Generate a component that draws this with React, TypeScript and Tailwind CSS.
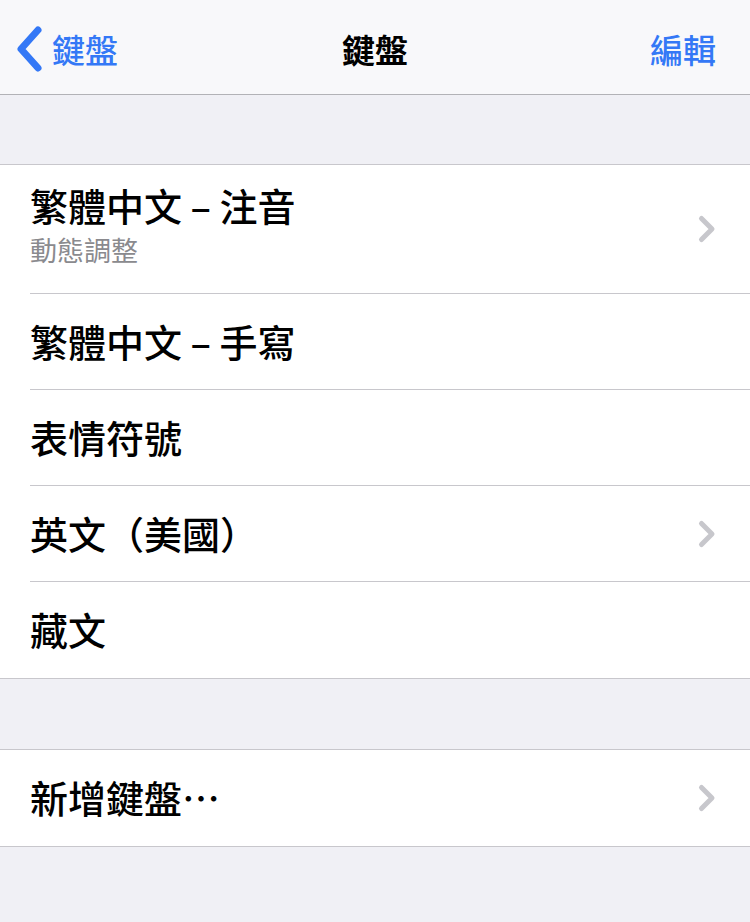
import React from "react";

const font = { fontFamily: '"Noto Sans CJK TC", "Noto Sans", sans-serif' };

interface Row {
  title: string;
  subtitle?: string;
  chevron?: boolean;
}

const keyboards: Row[] = [
  { title: "繁體中文 – 注音", subtitle: "動態調整", chevron: true },
  { title: "繁體中文 – 手寫" },
  { title: "表情符號" },
  { title: "英文（美國）", chevron: true },
  { title: "藏文" },
];

function Chevron() {
  return (
    <svg width="20" height="30" viewBox="0 0 20 30" fill="none">
      <path
        d="M4.5 4.5L15 15L4.5 25.5"
        stroke="#c7c7cc"
        strokeWidth="5"
        strokeLinecap="round"
        strokeLinejoin="round"
      />
    </svg>
  );
}

function ListRow({ row, last }: { row: Row; last: boolean }) {
  return (
    <div className="flex bg-white pl-[30px]">
      <div
        className={
          "flex flex-1 items-center justify-between pr-[33px] " +
          (row.subtitle ? "h-[129px] " : "h-[96px] ") +
          (last ? "" : "border-b border-[#c8c7cc]")
        }
      >
        <div className={"flex flex-col " + (row.subtitle ? "mb-[9px]" : "mb-[2px]")}>
          <span className="text-[38px] leading-none font-medium text-black">
            {row.title}
          </span>
          {row.subtitle && (
            <span className="mt-[12px] text-[27px] leading-none text-[#8a8a8e]">
              {row.subtitle}
            </span>
          )}
        </div>
        {row.chevron && <Chevron />}
      </div>
    </div>
  );
}

export default function App() {
  return (
    <div className="min-h-[922px] w-[750px] bg-[#f0f0f5]" style={font}>
      {/* Nav bar */}
      <div className="grid h-[95px] grid-cols-[1fr_auto_1fr] items-center border-b border-[#b2b2b6] bg-[#f8f8fa] pt-[4px]">
        <div className="flex items-center gap-[8px] pl-[14px]">
          <svg width="30" height="48" viewBox="0 0 30 48" fill="none">
            <path
              d="M24 5L7 24L24 43"
              stroke="#3478f6"
              strokeWidth="7"
              strokeLinecap="round"
              strokeLinejoin="round"
            />
          </svg>
          <span className="text-[33px] leading-none font-medium text-[#3478f6]">
            鍵盤
          </span>
        </div>
        <span className="text-[33px] leading-none font-bold text-black">鍵盤</span>
        <div className="flex justify-end pr-[34px]">
          <span className="text-[33px] leading-none font-medium text-[#3478f6]">
            編輯
          </span>
        </div>
      </div>

      <div className="h-[69px]" />

      <div className="border-y border-[#c8c7cc]">
        {keyboards.map((row, i) => (
          <ListRow key={row.title} row={row} last={i === keyboards.length - 1} />
        ))}
      </div>

      <div className="h-[70px]" />

      <div className="border-y border-[#c8c7cc]">
        <ListRow row={{ title: "新增鍵盤⋯", chevron: true }} last />
      </div>
    </div>
  );
}
